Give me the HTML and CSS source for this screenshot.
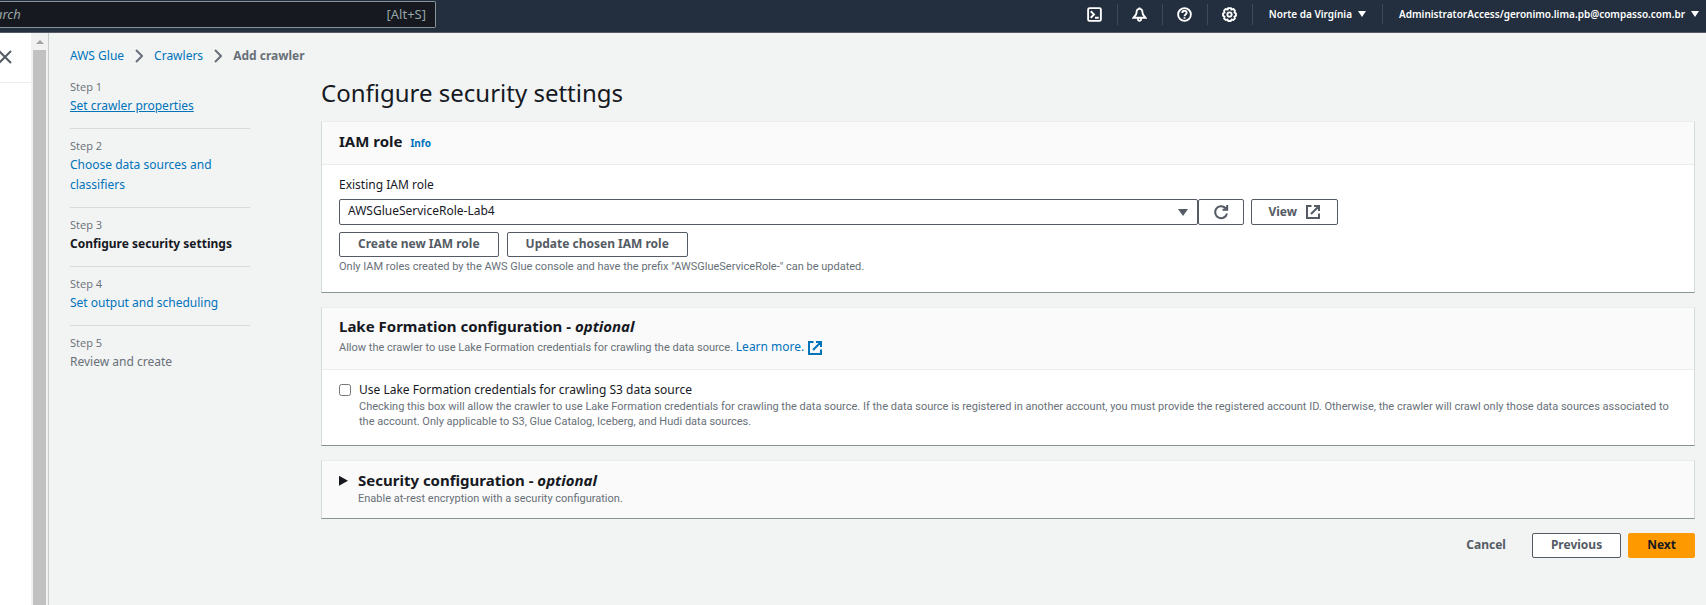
FILE: index.html
```html
<!DOCTYPE html>
<html lang="en">
<head>
<meta charset="utf-8">
<title>AWS Glue - Add crawler</title>
<link rel="stylesheet" href="styles.css">
</head>
<body>
<header class="topbar">
  <label class="search">
    <input class="search-input" type="search" placeholder="arch" aria-label="Search">
    <span class="search-key">[Alt+S]</span>
  </label>
  <nav class="tools">
    <button class="tool" type="button" aria-label="CloudShell"><svg class="tool-icon" viewBox="0 0 16 16"><rect x="1.2" y="1.2" width="13.6" height="13.6" rx="1.5"/><path d="M4 4.5 7.5 8 4 11.500M8.500 11.500H12.500"/></svg></button>
    <button class="tool" type="button" aria-label="Notifications"><svg class="tool-icon" viewBox="0 0 16 16"><path d="M8 2C5.600 2 4.800 3.800 4.800 6C4.800 8.500 3 9.300 1.500 11.500H14.500C13 9.300 11.200 8.500 11.200 6C11.200 3.800 10.400 2 8 2ZM8 .5V2M6.300 12.500C6.300 15.500 9.700 15.500 9.700 12.500"/></svg></button>
    <button class="tool" type="button" aria-label="Help"><svg class="tool-icon" viewBox="0 0 16 16"><circle cx="8" cy="8" r="6.800"/><path d="M5.700 6.300C5.700 3.200 10.300 3.200 10.300 6.200C10.300 8 8 7.800 8 9.800M8 11V12.600"/></svg></button>
    <button class="tool" type="button" aria-label="Settings"><svg class="tool-icon" viewBox="0 0 16 16"><path d="M6.500 1.200H9.500L10 2.700 12.300 2.200 13.800 4 13.300 6 14.900 7V9.300L13.300 10.200 13.800 12.200 12 13.800 10.200 13.400 9.300 14.900H6.700L5.800 13.400 4 13.800 2.200 12.200 2.700 10.200 1.100 9.300V7L2.700 6 2.200 4 3.800 2.200 6 2.700Z"/><circle cx="8" cy="8" r="2.300"/></svg></button>
    <button class="menu region" type="button">Norte da Virgínia <span class="caret"></span></button>
    <button class="menu account" type="button">AdministratorAccess/geronimo.lima.pb@compasso.com.br <span class="caret"></span></button>
  </nav>
</header>
<div class="shell">
  <aside class="drawer">
    <div class="drawer-head">
      <button class="close" type="button" aria-label="Close navigation"><svg class="close-icon" viewBox="0 0 14 14"><path d="M1 1 13 13M13 1 1 13"/></svg></button>
    </div>
  </aside>
  <div class="scrollbar"><span class="scroll-up"></span><div class="thumb"></div></div>
  <div class="page">
    <nav class="crumbs" aria-label="Breadcrumb">
      <a href="#glue">AWS Glue</a>
      <svg class="chevron" viewBox="0 0 8 14"><path d="M1 1 7 7 1 13"/></svg>
      <a href="#crawlers">Crawlers</a>
      <svg class="chevron" viewBox="0 0 8 14"><path d="M1 1 7 7 1 13"/></svg>
      <strong>Add crawler</strong>
    </nav>
    <div class="wizard">
      <ol class="steps">
        <li class="step"><small>Step 1</small><a class="underlined" href="#step1">Set crawler properties</a></li>
        <li class="step"><small>Step 2</small><a href="#step2">Choose data sources and classifiers</a></li>
        <li class="step"><small>Step 3</small><strong>Configure security settings</strong></li>
        <li class="step"><small>Step 4</small><a href="#step4">Set output and scheduling</a></li>
        <li class="step"><small>Step 5</small><span>Review and create</span></li>
      </ol>
      <main class="content">
        <h1>Configure security settings</h1>
        <section class="panel">
          <div class="panel-head"><h2>IAM role</h2><a class="info" href="#info">Info</a></div>
          <div class="panel-body role">
            <label class="label" for="role">Existing IAM role</label>
            <div class="role-grid">
              <div class="role-pick">
                <div class="select-wrap">
                  <select id="role" class="select"><option>AWSGlueServiceRole-Lab4</option></select>
                  <span class="caret select-caret"></span>
                </div>
                <button class="btn refresh" type="button" aria-label="Refresh"><svg class="icon" viewBox="0 0 16 16"><path d="M14 9.500A6 6 0 1 1 12.500 4L14 5.500M14.200 1V5.700H9.500"/></svg></button>
                <button class="btn view" type="button">View <svg class="icon" viewBox="0 0 16 16"><path d="M6.500 2H2V14H14V9.500M9 2H14V7M14 2 6 10"/></svg></button>
              </div>
            </div>
            <div class="role-actions">
              <button class="btn" type="button">Create new IAM role</button>
              <button class="btn" type="button">Update chosen IAM role</button>
            </div>
            <p class="hint">Only IAM roles created by the AWS Glue console and have the prefix "AWSGlueServiceRole-" can be updated.</p>
          </div>
        </section>
        <section class="panel">
          <div class="panel-head stacked">
            <h2>Lake Formation configuration - <em>optional</em></h2>
            <p class="hint">Allow the crawler to use Lake Formation credentials for crawling the data source. <a class="learn" href="#learn">Learn more. <svg class="icon" viewBox="0 0 16 16"><path d="M6.500 2H2V14H14V9.500M9 2H14V7M14 2 6 10"/></svg></a></p>
          </div>
          <div class="panel-body check">
            <input class="box" type="checkbox" id="lake">
            <div>
              <label class="check-label" for="lake">Use Lake Formation credentials for crawling S3 data source</label>
              <p class="hint">Checking this box will allow the crawler to use Lake Formation credentials for crawling the data source. If the data source is registered in another account, you must provide the registered account ID. Otherwise, the crawler will crawl only those data sources associated to the account. Only applicable to S3, Glue Catalog, Iceberg, and Hudi data sources.</p>
            </div>
          </div>
        </section>
        <section class="panel security">
          <button class="expand" type="button" aria-label="Expand security configuration" aria-expanded="false"></button>
          <div>
            <h2>Security configuration - <em>optional</em></h2>
            <p class="hint">Enable at-rest encryption with a security configuration.</p>
          </div>
        </section>
        <div class="footer">
          <button class="btn plain" type="button">Cancel</button>
          <button class="btn" type="button">Previous</button>
          <button class="btn primary" type="button">Next</button>
        </div>
      </main>
    </div>
  </div>
</div>
</body>
</html>
```
FILE: styles.css
```css
:root {
  --ink: #16191f;
  --muted: #687078;
  --line: #d5dbdb;
  --link: #0073bb;
  --button: #545b64;
}
* { box-sizing: border-box; }
body {
  margin: 0;
  min-height: 100vh;
  display: flex;
  flex-direction: column;
  background: #f2f3f3;
  color: var(--ink);
  font: 12px/20px "Noto Sans", "Open Sans", sans-serif;
}
h1, h2, p, ol { margin: 0; padding: 0; }
a { color: var(--link); text-decoration: none; }
button, input, select { font: inherit; color: inherit; }
svg { fill: none; stroke: currentColor; }

.topbar {
  display: flex;
  justify-content: space-between;
  height: 33px;
  background: #232f3e;
  border-bottom: 1px solid #545b64;
  color: #fff;
}
.search {
  display: flex;
  align-items: center;
  width: 436px;
  height: 27px;
  margin-top: 1px;
  padding: 0 9px 2px 0;
  background: #16191f;
  border: 1px solid #879596;
  border-left: 0;
  border-radius: 0 2px 2px 0;
  color: #95a5a6;
  font-size: 13px;
}
.search-input {
  flex: 1;
  min-width: 0;
  margin-left: -5px;
  padding: 0;
  background: none;
  border: 0;
  outline: 0;
}
.search-input::placeholder { color: #95a5a6; font-style: italic; opacity: 1; }
.tools { display: flex; align-items: center; height: 28px; }
.tool {
  display: flex;
  justify-content: center;
  width: 45px;
  padding: 3px 0;
  background: none;
  border: 0;
  border-right: 1px solid #3f4a58;
}
.tool-icon { width: 15px; height: 15px; stroke-width: 2; }
.menu {
  display: flex;
  align-items: center;
  gap: 6px;
  padding: 0 16px;
  background: none;
  border: 0;
  font-size: 10px;
  font-weight: 600;
}
.region { border-right: 1px solid #3f4a58; }
.account { padding: 0 7px 0 16px; }
.caret {
  border: 4px solid transparent;
  border-top: 6px solid currentColor;
  border-bottom: 0;
}

.shell { flex: 1; display: flex; }
.drawer { width: 31px; background: #fff; }
.drawer-head { height: 50px; padding-top: 17px; border-bottom: 1px solid #eaeded; }
.close { display: flex; margin-left: -2px; padding: 0; background: none; border: 0; color: var(--button); }
.close-icon { width: 14px; height: 14px; stroke-width: 2; }
.scrollbar {
  display: flex;
  flex-direction: column;
  align-items: center;
  gap: 6px;
  width: 17px;
  padding-top: 7px;
  background: #f1f1f1;
}
.scroll-up { border: 4px solid transparent; border-bottom-color: #a3a3a3; border-top: 0; }
.thumb { flex: 1; width: 13px; background: #c1c1c1; }

.page { flex: 1; min-width: 0; padding: 13px 11px 0 21px; border-left: 1px solid #c6cccc; }
.crumbs { display: flex; align-items: center; height: 20px; gap: 11px; }
.crumbs strong { color: var(--muted); }
.chevron { width: 8px; height: 14px; stroke: var(--muted); stroke-width: 2; }

.wizard { display: grid; grid-template-columns: 180px 1fr; gap: 71px; padding-top: 3px; }
.steps { list-style: none; padding-top: 10px; }
.step { display: flex; flex-direction: column; gap: 1px; padding: 9px 0 12px; border-bottom: 1px solid var(--line); color: var(--muted); }
.step:first-child { padding-top: 0; }
.step:last-child { border: 0; }
.step small { font-size: 11px; line-height: 16px; font-family: "Open Sans", sans-serif; }
.step strong { color: var(--ink); }
.underlined { text-decoration: underline; }

h1 { font-size: 24px; line-height: 32px; font-weight: 400; padding: 8px 0 12px; }
h2 { font-size: 15px; line-height: 20px; font-weight: 700; }
.panel {
  margin-bottom: 14px;
  background: #fff;
  border: 1px solid var(--line);
  border-top-color: #eaeded;
  border-bottom-color: #879596;
}
.panel-head {
  display: flex;
  align-items: baseline;
  gap: 8px;
  padding: 9px 17px 11px;
  background: #fafafa;
  border-bottom: 1px solid #eaeded;
}
.stacked { display: block; padding: 8px 17px 13px; }
.stacked .hint { padding-top: 3px; }
.info { font-size: 10px; font-weight: 700; }
.hint { font-family: Roboto, "Noto Sans", sans-serif; font-size: 11px; line-height: 15px; color: var(--muted); }
.role { padding: 10px 17px 18px; }
.label { display: block; padding-bottom: 4px; }
.role-grid { display: grid; grid-template-columns: 3fr 1fr; gap: 6px; }
.role-pick { display: flex; }
.select-wrap { position: relative; flex: 1; }
.select {
  width: 100%;
  height: 26px;
  padding: 0 8px 2px;
  appearance: none;
  background: #fff;
  border: 1px solid var(--button);
  border-radius: 2px;
}
.select-caret {
  position: absolute;
  top: 10px;
  right: 10px;
  border-width: 7px 5px 0;
  color: var(--button);
  pointer-events: none;
}
.btn {
  display: flex;
  align-items: center;
  justify-content: center;
  gap: 8px;
  height: 25px;
  padding: 0 18px 1px;
  background: #fff;
  border: 1px solid var(--button);
  border-radius: 2px;
  color: var(--button);
  font-weight: 700;
}
.icon { width: 16px; height: 16px; stroke-width: 2; }
.refresh { height: 26px; padding: 0 14px; }
.view { height: 26px; margin-left: 7px; padding: 0 16px; }
.role-actions { display: flex; gap: 8px; padding: 7px 0 2px; }
.learn { font-family: "Noto Sans", sans-serif; font-size: 12px; }
.learn .icon { vertical-align: middle; }
.check { display: flex; gap: 8px; padding: 10px 17px 16px; }
.box { flex: none; width: 12px; height: 12px; margin: 4px 0 0; }
.check-label { display: block; }
.check .hint { margin-top: -1px; }
.security { display: flex; gap: 10px; padding: 9px 17px 12px; background: #fafafa; }
.security .hint { padding-top: 1px; }
.expand {
  width: 9px;
  height: 10px;
  margin-top: 6px;
  padding: 0;
  background: var(--ink);
  border: 0;
  clip-path: polygon(0 0, 100% 50%, 0 100%);
}
.footer { display: flex; justify-content: flex-end; gap: 7px; }
.plain { background: none; border-color: transparent; }
.primary { background: #ff9900; border-color: #ff9900; color: var(--ink); }
```
